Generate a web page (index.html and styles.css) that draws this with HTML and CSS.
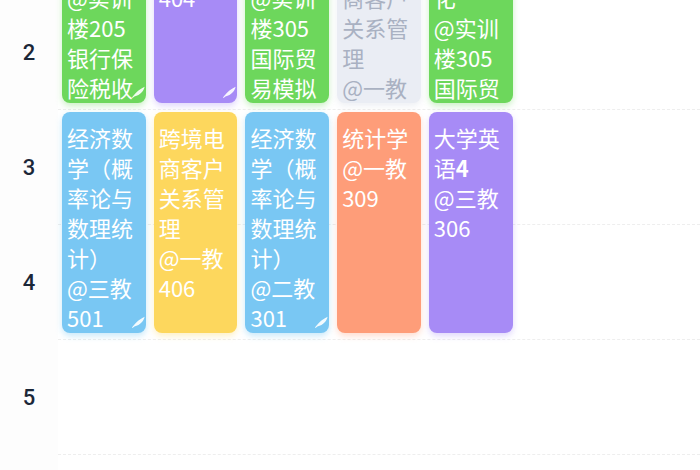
FILE: index.html
```html
<!DOCTYPE html>
<html lang="zh-CN">
<head>
<meta charset="utf-8">
<title>课程表</title>
<link rel="stylesheet" href="styles.css">
</head>
<body>
<div class="screen">
  <div class="timetable">
    <div class="num r1">1</div>
    <div class="num r2">2</div>
    <div class="num r3">3</div>
    <div class="num r4">4</div>
    <div class="num r5">5</div>
    <div class="num r6">6</div>

    <div class="line r1"></div>
    <div class="line r2"></div>
    <div class="line r3"></div>
    <div class="line r4"></div>
    <div class="line r5"></div>
    <div class="line r6"></div>

    <div class="card green c1 r1 span2">
      <div class="name">银行保险税收实务</div>
      <div class="room">@实训楼205</div>
      <div class="name">银行保险税收实务</div>
      <div class="room">@实训楼205</div>
      <svg class="leaf" viewBox="0 0 14 12"><path d="M1 11.6C3.2 8.6 7.4 3.6 13.6 0.8C12.8 4.8 9.6 9 3.4 10.6L1.6 11.9Z"/></svg>
    </div>
    <div class="card purple c2 r1 span2">
      <div class="name">大学英语<b>4</b></div>
      <div class="room">@三教404</div>
      <svg class="leaf" viewBox="0 0 14 12"><path d="M1 11.6C3.2 8.6 7.4 3.6 13.6 0.8C12.8 4.8 9.6 9 3.4 10.6L1.6 11.9Z"/></svg>
    </div>
    <div class="card green c3 r1 span2">
      <div class="name">国际贸易模拟实训</div>
      <div class="room">@实训楼305</div>
      <div class="name">国际贸易模拟实训</div>
    </div>
    <div class="card gray c4 r1 span2">
      <div class="name">非本周课程</div>
      <div class="name">跨境电商客户关系管理</div>
      <div class="room">@一教406</div>
    </div>
    <div class="card green c5 r1 span2">
      <div class="name">国际贸易业务流程优化</div>
      <div class="room">@实训楼305</div>
      <div class="name">国际贸易模拟实训</div>
    </div>

    <div class="card blue c1 r3 span2">
      <div class="name">经济数学（概率论与数理统计）</div>
      <div class="room">@三教501</div>
      <svg class="leaf" viewBox="0 0 14 12"><path d="M1 11.6C3.2 8.6 7.4 3.6 13.6 0.8C12.8 4.8 9.6 9 3.4 10.6L1.6 11.9Z"/></svg>
    </div>
    <div class="card yellow c2 r3 span2">
      <div class="name">跨境电商客户关系管理</div>
      <div class="room">@一教406</div>
    </div>
    <div class="card blue c3 r3 span2">
      <div class="name">经济数学（概率论与数理统计）</div>
      <div class="room">@二教301</div>
      <svg class="leaf" viewBox="0 0 14 12"><path d="M1 11.6C3.2 8.6 7.4 3.6 13.6 0.8C12.8 4.8 9.6 9 3.4 10.6L1.6 11.9Z"/></svg>
    </div>
    <div class="card orange c4 r3 span2">
      <div class="name">统计学</div>
      <div class="room">@一教309</div>
    </div>
    <div class="card purple c5 r3 span2">
      <div class="name">大学英语<b>4</b></div>
      <div class="room">@三教306</div>
    </div>
  </div>
</div>
</body>
</html>
```
FILE: styles.css
```css
html, body {
  margin: 0;
  padding: 0;
  background: #ffffff;
}

body {
  font-family: "Noto Sans CJK SC", "Noto Sans", sans-serif;
}

.screen {
  width: 700px;
  height: 470px;
  overflow: hidden;
}

.timetable {
  display: grid;
  grid-template-columns: 58px repeat(7, 1fr);
  grid-template-rows: repeat(6, 115px);
  margin-top: -120px;
}

.r1 { grid-row: 1; }
.r2 { grid-row: 2; }
.r3 { grid-row: 3; }
.r4 { grid-row: 4; }
.r5 { grid-row: 5; }
.r6 { grid-row: 6; }
.span2 { grid-row-end: span 2; }

.c1 { grid-column: 2; }
.c2 { grid-column: 3; }
.c3 { grid-column: 4; }
.c4 { grid-column: 5; }
.c5 { grid-column: 6; }

.num {
  grid-column: 1;
  display: flex;
  align-items: center;
  justify-content: center;
  font-family: Roboto, "Liberation Sans", sans-serif;
  font-size: 22px;
  font-weight: 500;
  color: #1b2738;
  background: #fdfdfd;
}

.line {
  grid-column: 2 / -1;
  border-bottom: 1px dashed #eeeeee;
}

.card {
  position: relative;
  margin: 2px 4px 7px 4px;
  padding: 10px 3px 0 5px;
  border-radius: 8px;
  overflow: hidden;
  color: #ffffff;
  font-size: 22px;
  font-weight: 400;
  line-height: 30px;
}

.card b {
  font-weight: 700;
}

.green {
  background: #6dd75c;
  box-shadow: 0 3px 6px rgba(109, 215, 92, 0.35);
}

.purple {
  background: #a78bf6;
  box-shadow: 0 3px 6px rgba(167, 139, 246, 0.35);
}

.gray {
  background: #eaedf4;
  color: #a9b1c2;
  box-shadow: 0 3px 6px rgba(200, 206, 220, 0.3);
}

.blue {
  background: #79c7f3;
  box-shadow: 0 3px 6px rgba(121, 199, 243, 0.4);
}

.yellow {
  background: #fdd75d;
  box-shadow: 0 3px 6px rgba(253, 215, 93, 0.35);
}

.orange {
  background: #fe9d79;
  box-shadow: 0 3px 6px rgba(254, 157, 121, 0.35);
}

.leaf {
  position: absolute;
  right: 1px;
  bottom: 5px;
  width: 14px;
  height: 12px;
  fill: rgba(255, 255, 255, 0.9);
}
```
